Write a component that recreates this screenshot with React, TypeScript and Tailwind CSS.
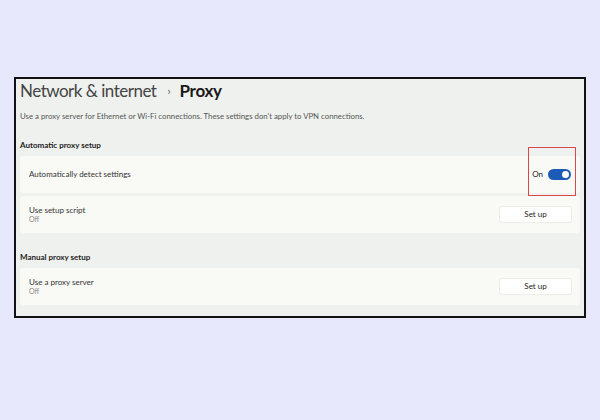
import React from 'react';

interface SettingRow {
    label: string;
    sub?: string;
    action: 'toggle' | 'button';
}

const font = { fontFamily: 'Lato, "Noto Sans", sans-serif' };

const Toggle: React.FC<{ on: boolean }> = ({ on }) => (
    <div className="flex items-center gap-[5px]">
        <span className="text-[8px] text-[#222]">{on ? 'On' : 'Off'}</span>
        <div className="relative w-[23px] h-[11px] rounded-full bg-[#1c5cb8]">
            <div className="absolute right-[2.5px] top-[2px] w-[7px] h-[7px] rounded-full bg-white" />
        </div>
    </div>
);

const SetupButton: React.FC = () => (
    <button className="w-[73px] h-[17px] rounded-[3px] bg-white border border-[#ecece8] text-[8px] text-[#222]">
        Set up
    </button>
);

const Card: React.FC<{ row: SettingRow; highlight?: boolean; className?: string }> = ({ row, highlight, className }) => (
    <div className={`h-[37px] rounded-[3px] bg-[#f9f9f6] pl-[9px] pr-[8px] flex items-center justify-between ${className ?? ''}`}>
        <div className="flex flex-col leading-none">
            <span className="text-[8px] text-[#333]">{row.label}</span>
            {row.sub && <span className="text-[7px] text-[#888] mt-[2px]">{row.sub}</span>}
        </div>
        {row.action === 'toggle' ? (
            <div className="relative flex items-center pr-[1px]">
                <Toggle on />
                {highlight && (
                    <div className="absolute -left-[4px] -right-[4px] -top-[21px] -bottom-[16px] border-[1.5px] border-[#d8474c]" />
                )}
            </div>
        ) : (
            <SetupButton />
        )}
    </div>
);

const App: React.FC = () => {
    return (
        <div className="w-[600px] h-[420px] bg-[#e8e8fc] pt-[77px] pl-[14px]" style={font}>
            <div className="w-[572px] h-[241px] border-2 border-[#111] bg-[#eff1ee] pl-[4px] pr-[4px]">
                <div className="flex items-center h-[24px]">
                    <span className="text-[17px] text-[#444] tracking-[-0.5px]">Network &amp; internet</span>
                    <span className="text-[11px] text-[#555] ml-[11px] mr-[9px]">›</span>
                    <span className="text-[17px] font-bold text-[#1a1a1a] tracking-[-0.3px]">Proxy</span>
                </div>
                <p className="text-[7.8px] text-[#555] mt-[10px] leading-none">
                    Use a proxy server for Ethernet or Wi-Fi connections. These settings don't apply to VPN connections.
                </p>

                <h3 className="text-[8px] font-bold text-[#222] mt-[20px] leading-none">Automatic proxy setup</h3>
                <Card className="mt-[7px]" highlight row={{ label: 'Automatically detect settings', action: 'toggle' }} />
                <Card className="mt-[3px]" row={{ label: 'Use setup script', sub: 'Off', action: 'button' }} />

                <h3 className="text-[8px] font-bold text-[#222] mt-[20px] leading-none">Manual proxy setup</h3>
                <Card className="mt-[7px]" row={{ label: 'Use a proxy server', sub: 'Off', action: 'button' }} />
            </div>
        </div>
    );
};

export default App;
